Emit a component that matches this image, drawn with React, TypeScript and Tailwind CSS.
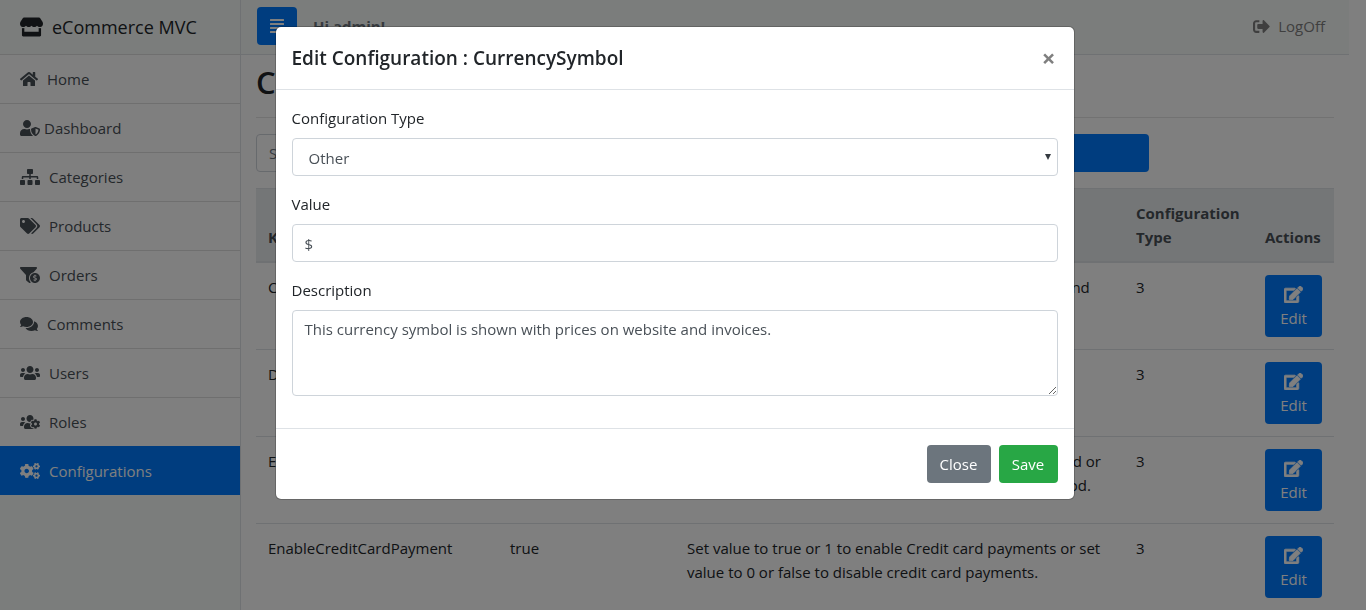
import React from "react";
import type { IconType } from "react-icons";
import {
  FaStore,
  FaHome,
  FaUserShield,
  FaSitemap,
  FaTags,
  FaFunnelDollar,
  FaComments,
  FaUsers,
  FaUsersCog,
  FaCogs,
  FaAlignJustify,
  FaSignOutAlt,
  FaEdit,
} from "react-icons/fa";

type NavItem = { label: string; Icon: IconType; iconClass: string; active?: boolean };

const navItems: NavItem[] = [
  { label: "Home", Icon: FaHome, iconClass: "h-4 w-[18px] mr-[9px]" },
  { label: "Dashboard", Icon: FaUserShield, iconClass: "h-4 w-5 mr-1" },
  { label: "Categories", Icon: FaSitemap, iconClass: "h-4 w-5 mr-[9px]" },
  { label: "Products", Icon: FaTags, iconClass: "h-4 w-5 mr-[9px]" },
  { label: "Orders", Icon: FaFunnelDollar, iconClass: "h-4 w-5 mr-[9px]" },
  { label: "Comments", Icon: FaComments, iconClass: "h-4 w-[18px] mr-[9px]" },
  { label: "Users", Icon: FaUsers, iconClass: "h-4 w-5 mr-[9px]" },
  { label: "Roles", Icon: FaUsersCog, iconClass: "h-4 w-5 mr-[9px]" },
  { label: "Configurations", Icon: FaCogs, iconClass: "h-4 w-5 mr-[9px]", active: true },
];

const rows = [
  {
    key: "CurrencySymbol",
    value: "$",
    description: "This currency symbol is shown with prices on website and invoices.",
    type: 3,
  },
  {
    key: "DefaultRating",
    value: "5",
    description: "Default rating of new products.",
    type: 3,
  },
  {
    key: "EnableCashOnDelivery",
    value: "true",
    description:
      "Set value to true or 1 to enable Cash on Delivery method or set value to 0 or false to disable Cash on Delivery method.",
    type: 3,
  },
  {
    key: "EnableCreditCardPayment",
    value: "true",
    description:
      "Set value to true or 1 to enable Credit card payments or set value to 0 or false to disable credit card payments.",
    type: 3,
  },
];

function Sidebar() {
  return (
    <aside className="w-[241px] shrink-0 border-r border-[#dee2e6] bg-[#f7faf8]">
      <div className="flex h-[54px] items-center px-5 text-lg text-[#212529]">
        <FaStore className="mr-[9px] h-5 w-[23px]" />
        eCommerce MVC
      </div>
      <nav className="bg-white">
        {navItems.map(({ label, Icon, iconClass, active }) => (
          <a
            key={label}
            href="#"
            className={
              active
                ? "flex h-[49px] items-center bg-[#007bff] px-5 text-white"
                : "flex h-[49px] items-center border-t border-[#dfdfdf] px-5 text-[#495057]"
            }
          >
            <Icon className={iconClass} />
            {label}
          </a>
        ))}
      </nav>
    </aside>
  );
}

function ConfigurationsPage() {
  return (
    <main className="px-[15px] pt-2">
      <h2 className="text-[31px] leading-[38px] font-semibold">Configurations</h2>
      <hr className="mt-4 mb-4 border-[#e5e5e5]" />
      <form className="mb-4 flex w-[893px] max-w-full">
        <input
          aria-label="Search"
          placeholder="Search..."
          className="h-[38px] min-w-0 flex-1 rounded-sm border border-[#ced4da] px-3 placeholder:text-[#6c757d]"
        />
        <button type="button" className="ml-8 h-[38px] w-[268px] rounded bg-[#007bff] text-white">
          Search
        </button>
      </form>
      <table className="w-full table-fixed border-collapse">
        <colgroup>
          <col className="w-[242px]" />
          <col className="w-[177px]" />
          <col />
          <col className="w-[129px]" />
          <col className="w-[81px]" />
        </colgroup>
        <thead className="bg-[#e9ecef] text-left align-bottom font-bold text-[#495057]">
          <tr className="border-t border-b-2 border-[#dee2e6]">
            <th className="p-3">Key</th>
            <th className="p-3">Value</th>
            <th className="p-3">Description</th>
            <th className="p-3">Configuration Type</th>
            <th className="p-3">Actions</th>
          </tr>
        </thead>
        <tbody>
          {rows.map((row) => (
            <tr key={row.key} className="border-b border-[#dee2e6] align-top">
              <td className="p-3">{row.key}</td>
              <td className="p-3">{row.value}</td>
              <td className="p-3">{row.description}</td>
              <td className="p-3">{row.type}</td>
              <td className="p-3">
                <button
                  type="button"
                  className="flex h-[62px] w-full flex-col items-center rounded bg-[#007bff] pt-[7px] text-white"
                >
                  <span className="flex h-6 items-center">
                    <FaEdit className="h-[17px] w-[19px] stroke-current stroke-[24]" />
                  </span>
                  Edit
                </button>
              </td>
            </tr>
          ))}
        </tbody>
      </table>
    </main>
  );
}

const fieldClass =
  "mt-2 block w-full rounded border border-[#ced4da] bg-white px-3 text-[#495057] outline-none";

function EditDialog() {
  return (
    <div className="fixed inset-0 flex items-start justify-center overflow-hidden bg-black/50 pt-[26px] pr-[17px]">
      <div
        role="dialog"
        aria-modal="true"
        aria-labelledby="dialog-title"
        className="w-full max-w-[800px] rounded-md border border-black/20 bg-white bg-clip-padding"
      >
        <div className="flex h-[63px] items-center justify-between border-b border-[#dee2e6] px-4">
          <h5 id="dialog-title" className="text-[19px] font-semibold">
            Edit Configuration : CurrencySymbol
          </h5>
          <button type="button" aria-label="Close dialog" className="px-[2px] text-2xl font-bold text-[#7f7f7f]">
            ×
          </button>
        </div>
        <form className="px-4 pt-4 pb-8">
          <div className="mb-4">
            <label htmlFor="type">Configuration Type</label>
            <div className="relative">
              <select id="type" defaultValue="Other" className={`${fieldClass} h-[38px] appearance-none pt-[2px] pl-4`}>
                <option>Other</option>
              </select>
              <svg viewBox="0 0 6 6" className="pointer-events-none absolute top-4 right-[7px] h-[6px] w-[6px]">
                <path d="M0 0h6L3 6z" fill="#343a40" />
              </svg>
            </div>
          </div>
          <div className="mb-4">
            <label htmlFor="value">Value</label>
            <input id="value" defaultValue="$" className={`${fieldClass} h-[38px] pt-[2px]`} />
          </div>
          <label htmlFor="description">Description</label>
          <textarea
            id="description"
            defaultValue="This currency symbol is shown with prices on website and invoices."
            className={`${fieldClass} h-[86px] resize py-[6px]`}
          />
        </form>
        <div className="flex justify-end gap-2 border-t border-[#dee2e6] p-4">
          <button type="button" className="h-[38px] w-16 rounded bg-[#6c757d] text-white">
            Close
          </button>
          <button type="button" className="h-[38px] w-[59px] rounded bg-[#28a745] text-white">
            Save
          </button>
        </div>
      </div>
    </div>
  );
}

export default function App() {
  return (
    <div className="h-screen overflow-hidden bg-white font-['Open_Sans',sans-serif] text-[15px] leading-6 text-[#212529]">
      <div className="flex min-h-screen pr-[17px]">
        <Sidebar />
        <div className="min-w-0 flex-1">
          <header className="flex h-[55px] items-center border-b border-[#dee2e6] bg-[#f7faf8] px-4 pb-[2px]">
            <button
              type="button"
              aria-label="Toggle menu"
              className="mr-4 flex h-[38px] w-10 items-center justify-center rounded bg-[#007bff] text-white"
            >
              <FaAlignJustify className="h-4 w-[14px]" />
            </button>
            <span className="font-bold text-[#6c757d]">Hi admin!</span>
            <a href="#" className="ml-auto flex items-center gap-2 pr-2 text-[#7f7f7f]">
              <FaSignOutAlt className="h-[17px] w-[17px]" />
              LogOff
            </a>
          </header>
          <ConfigurationsPage />
        </div>
      </div>
      <EditDialog />
    </div>
  );
}
